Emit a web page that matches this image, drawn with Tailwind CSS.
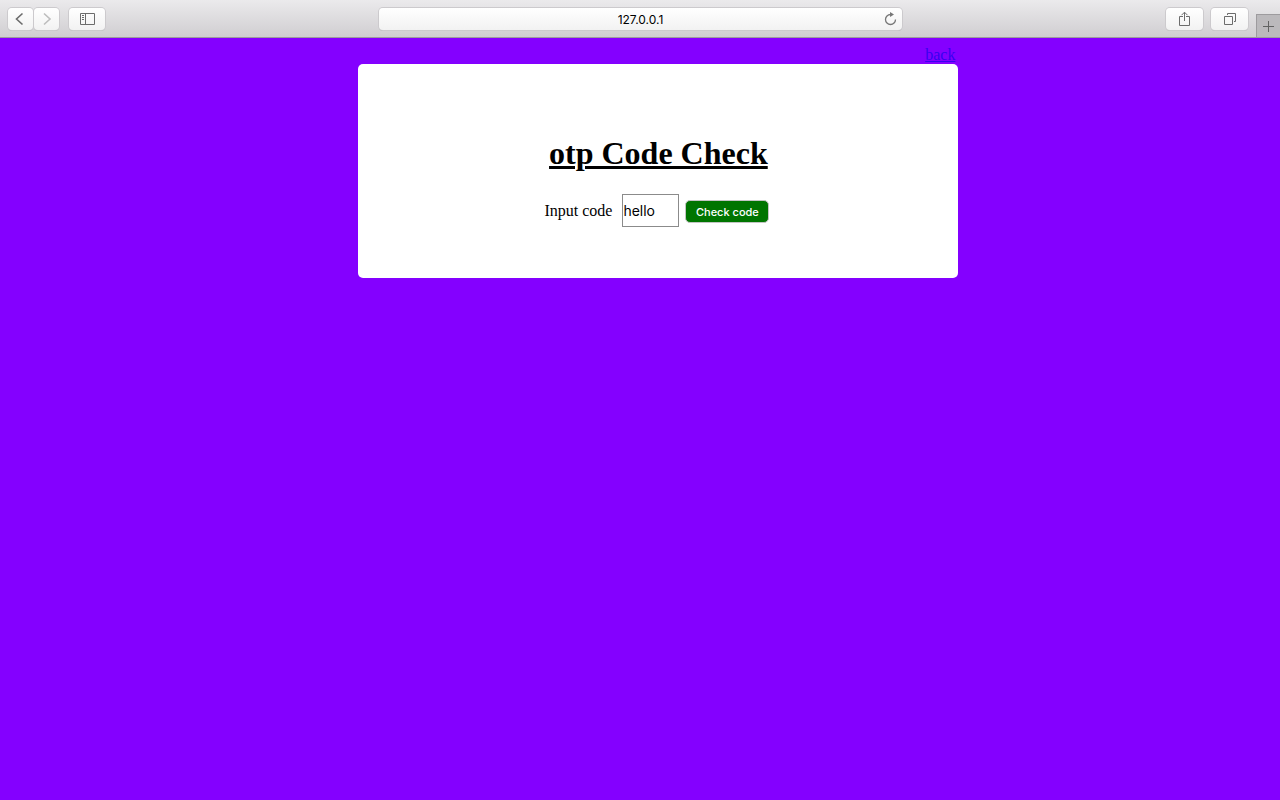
<!DOCTYPE html>
<html lang="en">
<head>
<meta charset="utf-8">
<title>otp Code Check</title>
<script src="https://cdn.jsdelivr.net/npm/@tailwindcss/browser@4"></script>
</head>
<body class="min-h-screen bg-[#8400ff] font-['Liberation_Serif',serif] text-base text-black">
<header class="grid h-[38px] grid-cols-[1fr_41%_1fr] border-b border-[#9d9b9e] bg-linear-to-b from-[#ebeaec] to-[#d0ced1] font-[Inter,sans-serif]">
  <div class="flex items-start pt-2 pl-2">
    <button aria-label="Back" class="flex h-[22px] w-[25px] items-center justify-center rounded-sm bg-linear-to-b from-white to-[#f2f2f2] pr-[3px] shadow-[0_0_0_1px_#cccacd,0_1px_0_0_#bcbabd]">
      <svg class="h-[14px] w-[10px]" viewBox="0 0 10 14" fill="none" stroke="#6c6c6c" stroke-width="1.6"><path d="M8.500 1.500 2.500 7l6 5.500"/></svg>
    </button>
    <button aria-label="Forward" class="ml-px flex h-[22px] w-[25px] items-center justify-center rounded-sm bg-linear-to-b from-white to-[#f2f2f2] shadow-[0_0_0_1px_#cccacd,0_1px_0_0_#bcbabd]">
      <svg class="h-[14px] w-[10px]" viewBox="0 0 10 14" fill="none" stroke="#bdbdbd" stroke-width="1.600"><path d="M2 1.500 8 7l-6 5.500"/></svg>
    </button>
    <button aria-label="Show sidebar" class="ml-[10px] flex h-[22px] w-9 items-center justify-center rounded-sm bg-linear-to-b from-white to-[#f2f2f2] shadow-[0_0_0_1px_#cccacd,0_1px_0_0_#bcbabd]">
      <svg class="h-3 w-[15px]" viewBox="0 0 15 12" fill="none" stroke="#6c6c6c"><path d="M.5.5h14v11H.5zM5.500.5v11M2 2.500h2M2 4.500h2M2 6.500h2"/></svg>
    </button>
  </div>
  <div class="mt-2 ml-px grid h-[22px] grid-cols-[1fr_auto_1fr] items-center rounded-sm bg-linear-to-b from-white to-[#f2f2f2] shadow-[0_0_0_1px_#cccacd,0_1px_0_0_#b5b3b6]">
    <span></span>
    <span class="pt-px text-xs">127.0.0.1</span>
    <button aria-label="Reload" class="mr-[5px] justify-self-end">
      <svg class="h-[14px] w-[13px]" viewBox="0 0 13 14" fill="none" stroke="#777"><path d="M6.500 2.500a5 5 0 1 0 5 5" stroke-width="1.300"/><path d="M6 0v5l4-2.500z" fill="#777" stroke="none"/></svg>
    </button>
  </div>
  <div class="flex items-start justify-end pt-2">
    <button aria-label="Share" class="flex h-[22px] w-[37px] items-center justify-center rounded-sm bg-linear-to-b from-white to-[#f2f2f2] shadow-[0_0_0_1px_#cccacd,0_1px_0_0_#bcbabd]">
      <svg class="h-4 w-[11px]" viewBox="0 0 11 16" fill="none" stroke="#6c6c6c"><path d="M4 5.500H.5v9h10v-9H7M5.500 10V1.500M2.500 4.200l3-3 3 3"/></svg>
    </button>
    <button aria-label="Show all tabs" class="ml-2 flex h-[22px] w-[37px] items-center justify-center rounded-sm bg-linear-to-b from-white to-[#f2f2f2] shadow-[0_0_0_1px_#cccacd,0_1px_0_0_#bcbabd]">
      <svg class="h-3 w-3" viewBox="0 0 12 12" fill="none" stroke="#6c6c6c"><path d="M.5 3.500h8v8h-8zM3.500 2V.5h8v8H10"/></svg>
    </button>
    <button aria-label="New tab" class="mt-[6px] ml-2 flex h-[23px] w-6 items-center justify-center border-t border-l border-[#9d9b9e] bg-[#bbb9bc]">
      <svg class="h-[11px] w-[11px]" viewBox="0 0 11 11" stroke="#626262"><path d="M5.500 0v11M0 5.500h11"/></svg>
    </button>
  </div>
</header>
<main class="ml-[28%] w-[600px] max-w-full pt-2">
  <nav class="flex h-[18px] justify-end pr-[3px] leading-[18px]"><a href="#" class="text-[#3800f0] underline">back</a></nav>
  <section class="rounded-[5px] bg-white pt-[71px] pb-[51px]">
    <h1 class="text-center text-[32px] leading-[37px] font-bold underline">otp Code Check</h1>
    <form class="mt-[22px] flex items-center justify-center pr-[3px]">
      <label for="code">Input code</label>
      <input id="code" type="text" value="hello" class="ml-[10px] h-[33px] w-[57px] border border-[#8b8b8b] bg-white font-[Inter,sans-serif] text-sm">
      <button type="button" class="mt-[2px] ml-[6px] h-[23px] w-[84px] rounded-[5px] border border-[#c4c4c4] bg-[#007500] pt-px font-[Inter,sans-serif] text-[11px] font-medium text-white">Check code</button>
    </form>
  </section>
</main>
</body>
</html>
